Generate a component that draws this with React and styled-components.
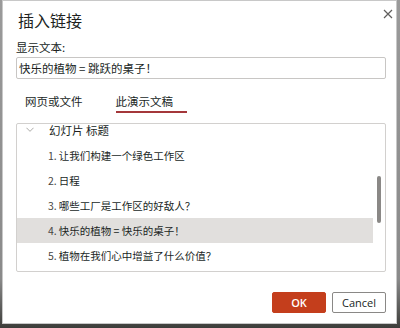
import React from "react";
import styled, { createGlobalStyle } from "styled-components";

const Global = createGlobalStyle`
  html, body { margin: 0; padding: 0; }
  body {
    width: 400px;
    height: 328px;
    overflow: hidden;
    background: linear-gradient(to bottom, #9a9a9a 0%, #8a8a8a 85%, #3d3d3a 100%);
    font-family: "Open Sans", "Noto Sans CJK SC", sans-serif;
  }
`;

const Dialog = styled.div`
  box-sizing: border-box;
  margin-left: 2px;
  width: 395px;
  height: 324px;
  background: #fff;
  border: 1px solid #c8c8c8;
  display: flex;
  flex-direction: column;
  padding: 0 11px 0 13px;
  color: #201f1e;
`;

const Header = styled.div`
  display: flex;
  justify-content: space-between;
  align-items: flex-start;
  padding-top: 9px;
  height: 29px;
`;

const Title = styled.h1`
  margin: 0 0 0 2px;
  font-size: 16px;
  font-weight: 400;
  line-height: 20px;
  font-family: "Noto Sans CJK SC", sans-serif;
`;

const Close = styled.button`
  border: 0;
  background: none;
  padding: 0;
  margin: -2px -9px 0 0;
  width: 12px;
  height: 12px;
  color: #605e5c;
  display: flex;
`;

const Label = styled.div`
  font-size: 11.5px;
  line-height: 16px;
  font-family: "Noto Sans CJK SC", sans-serif;
`;

const Input = styled.div`
  box-sizing: border-box;
  margin-top: 2px;
  height: 22px;
  width: 370px;
  border: 1px solid #c8c6c4;
  border-radius: 2px;
  font-size: 11.5px;
  line-height: 20px;
  padding-left: 2px;
  font-family: "Noto Sans CJK SC", sans-serif;
`;

const Tabs = styled.div`
  display: flex;
  gap: 33px;
  margin-top: 14px;
  padding-left: 9px;
`;

const Tab = styled.div`
  font-size: 11.5px;
  line-height: 16px;
  height: 18px;
  font-family: "Noto Sans CJK SC", sans-serif;
  border-bottom: 2px solid ${(p) => (p.$active ? "#a4373a" : "transparent")};
  width: ${(p) => (p.$active ? "71px" : "auto")};
`;

const ListBox = styled.div`
  box-sizing: border-box;
  margin-top: 10px;
  width: 370px;
  height: 149px;
  border: 1px solid #d2d0ce;
  border-radius: 2px;
  position: relative;
  overflow: hidden;
`;

const Row = styled.div`
  height: 25px;
  display: flex;
  align-items: center;
  width: 356px;
  padding-left: ${(p) => (p.$head ? "9px" : "31px")};
  box-sizing: border-box;
  background: ${(p) => (p.$sel ? "#e1dfdd" : "transparent")};
  font-size: ${(p) => (p.$head ? "11.5px" : "10.5px")};
  font-family: "Noto Sans CJK SC", sans-serif;
  white-space: nowrap;
`;

const HeadRow = styled(Row)`
  height: 14px;
  margin-top: -1px;
  margin-bottom: 6px;
`;

const Chevron = styled.span`
  display: inline-flex;
  width: 8px;
  margin-right: 15px;
  color: #a19f9d;
`;

const Num = styled.span`
  color: #484644;
  margin-right: 2px;
`;

const Scroll = styled.div`
  position: absolute;
  right: 4px;
  top: 52px;
  width: 4px;
  height: 47px;
  border-radius: 2px;
  background: #8a8886;
`;

const Footer = styled.div`
  display: flex;
  justify-content: flex-end;
  gap: 6px;
  margin-top: 20px;
  width: 370px;
`;

const Button = styled.button`
  box-sizing: border-box;
  width: 54px;
  height: 21px;
  padding: 0;
  font-family: "Open Sans", sans-serif;
  font-size: 11px;
  font-weight: ${(p) => (p.$primary ? 600 : 400)};
  background: ${(p) => (p.$primary ? "#c43e1c" : "#fff")};
  color: ${(p) => (p.$primary ? "#fff" : "#201f1e")};
  border: 1px solid ${(p) => (p.$primary ? "#c43e1c" : "#8a8886")};
  border-radius: 2px;
`;

const items = [
  "让我们构建一个绿色工作区",
  "日程",
  "哪些工厂是工作区的好敌人？",
  "快乐的植物 = 快乐的桌子！",
  "植物在我们心中增益了什么价值？",
];

export default function App() {
  return (
    <>
      <Global />
      <Dialog>
        <Header>
          <Title>插入链接</Title>
          <Close aria-label="close">
            <svg width="12" height="12" viewBox="0 0 12 12">
              <path d="M2 2 L10 10 M10 2 L2 10" stroke="#605e5c" strokeWidth="1.2" />
            </svg>
          </Close>
        </Header>
        <Label>显示文本:</Label>
        <Input>快乐的植物 = 跳跃的桌子！</Input>
        <Tabs>
          <Tab>网页或文件</Tab>
          <Tab $active>此演示文稿</Tab>
        </Tabs>
        <ListBox>
          <HeadRow $head>
            <Chevron>
              <svg width="9" height="6" viewBox="0 0 9 6">
                <path d="M0.5 0.5 L4.5 4.5 L8.5 0.5" fill="none" stroke="#a19f9d" strokeWidth="1" />
              </svg>
            </Chevron>
            幻灯片 标题
          </HeadRow>
          {items.map((t, i) => (
            <Row key={i} $sel={i === 3}>
              <Num>{i + 1}.</Num>
              {t}
            </Row>
          ))}
          <Scroll />
        </ListBox>
        <Footer>
          <Button $primary>OK</Button>
          <Button>Cancel</Button>
        </Footer>
      </Dialog>
    </>
  );
}
